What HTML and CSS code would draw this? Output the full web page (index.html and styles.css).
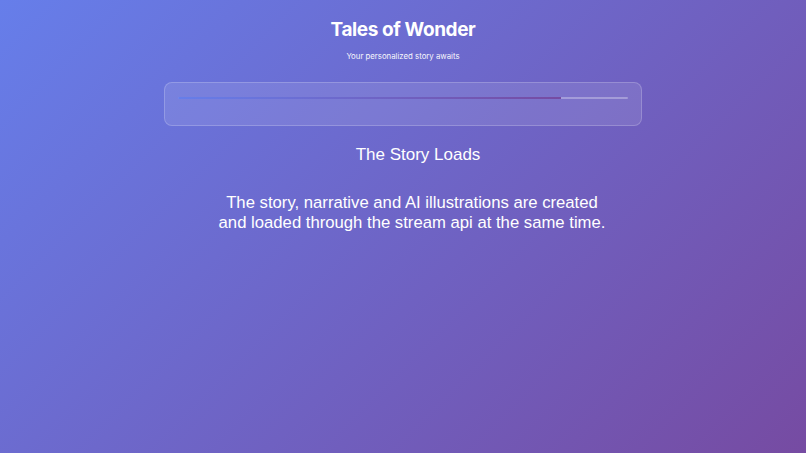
FILE: index.html
```html
<!DOCTYPE html>
<html>
<head>
<meta charset="utf-8">
<link rel="stylesheet" href="styles.css">
</head>
<body>
<div class="page">
  <header class="header">
    <h1 class="title">Tales of Wonder</h1>
    <p class="subtitle">Your personalized story awaits</p>
  </header>
  <div class="card">
    <div class="track"><div class="fill" style="width:85%"></div></div>
  </div>
  <h2 class="heading">The Story Loads</h2>
  <p class="text">The story, narrative and AI illustrations are created<br>and loaded through the stream api at the same time.</p>
</div>
</body>
</html>
```
FILE: styles.css
```css
html, body { margin: 0; padding: 0; height: 100%; }
body {
  background: linear-gradient(135deg, #667eea 0%, #764ba2 100%);
  color: #fff;
  font-family: "Inter", "Liberation Sans", sans-serif;
}
.page {
  display: flex;
  flex-direction: column;
  align-items: center;
  padding-top: 18px;
}
.header { text-align: center; }
.title {
  margin: 0;
  font-size: 19px;
  font-weight: 700;
  line-height: 24px;
  letter-spacing: -0.4px;
}
.subtitle {
  margin: 8px 0 0;
  font-size: 7.8px;
  line-height: 12px;
  opacity: 0.95;
}
.card {
  margin-top: 20px;
  width: 478px;
  height: 44px;
  box-sizing: border-box;
  background: rgba(255,255,255,0.1);
  border: 1px solid rgba(255,255,255,0.2);
  border-radius: 8px;
  padding: 14px 13px 0;
}
.track {
  height: 2px;
  background: rgba(255,255,255,0.3);
  border-radius: 1px;
  overflow: hidden;
}
.fill {
  height: 100%;
  background: linear-gradient(90deg, #667eea, #764ba2);
}
.heading {
  margin: 19px 0 0;
  padding-left: 30px;
  font-family: "Liberation Sans", sans-serif;
  font-weight: 400;
  font-size: 17px;
  line-height: 20px;
}
.text {
  margin: 28px 0 0;
  padding-left: 18px;
  text-align: center;
  font-family: "Liberation Sans", sans-serif;
  font-size: 16.7px;
  line-height: 20px;
}
```
